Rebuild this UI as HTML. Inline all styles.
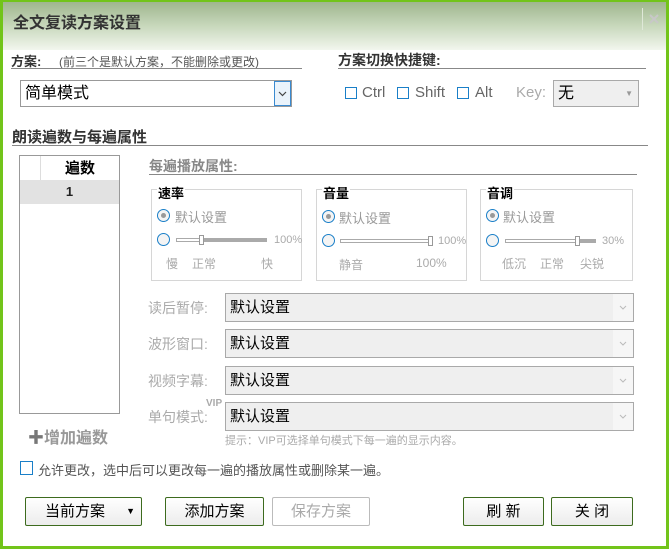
<!DOCTYPE html>
<html><head><meta charset="utf-8"><style>
*{margin:0;padding:0;box-sizing:border-box}
body{width:669px;height:549px;overflow:hidden;background:#fff;font-family:"Liberation Sans","Noto Sans CJK SC",sans-serif;position:relative;color:#333}
.a{position:absolute;white-space:nowrap}
.frame{position:absolute;left:0;top:0;width:669px;height:549px;border:3px solid #72c41a;border-top-width:2px}
.title{position:absolute;left:3px;top:2px;width:663px;height:48px;background:linear-gradient(#9fb68e,#c8d8bc 50%,#f2f6ee)}
.line{position:absolute;height:1px;background:#888}
.sel{position:absolute;border:1px solid #a9a9a9;background:#efefef;font-size:15px;color:#000;padding-left:4px;line-height:27px}
.sel svg.ch{position:absolute;right:0;top:0;width:20px;height:27px;background:#f6f6f6}
.cb{position:absolute;width:12px;height:12px;border:1px solid #1a7fc8;background:#fff}
.grp{position:absolute;border:1px solid #d6d6d6}
.leg{position:absolute;top:-7px;left:5px;background:#fff;font-weight:bold;font-size:13px;color:#000;padding:0 1px}
.rad{position:absolute;width:13px;height:13px;border:1px solid #1a7fc8;border-radius:50%;background:#f4f4f4}
.rad.on::after{content:"";position:absolute;left:3px;top:3px;width:5px;height:5px;border-radius:50%;background:#999}
.g{color:#aaa;font-size:12px}
.btn{position:absolute;height:29px;border:1px solid #3d6b1e;background:linear-gradient(#fff,#ececec);font-size:15px;color:#000;text-align:center;line-height:27px;border-radius:2px}
</style></head><body>
<div class="frame"></div>
<div class="title"></div>
<div class="a" style="left:13px;top:9px;font-size:16px;font-weight:bold;color:#333">全文复读方案设置</div>
<div class="a" style="left:642px;top:8px;width:22px;height:22px;border-left:1px solid #dfe8d8"><svg width="22" height="22"><path d="M7 7L15 15M15 7L7 15" stroke="#c8c8c8" stroke-width="2" fill="none"/></svg></div>

<div class="a" style="left:11px;top:51px;font-size:13px;font-weight:bold">方案:</div>
<div class="a" style="left:59px;top:53px;font-size:12px;color:#555">(前三个是默认方案，不能删除或更改)</div>
<div class="line" style="left:11px;top:68px;width:291px"></div>
<div class="sel" style="left:20px;top:80px;width:272px;height:27px;background:#fff;border-color:#999;font-size:16px;line-height:25px">简单模式
<div style="position:absolute;right:0;top:0;width:17px;height:25px;border:1px solid #3a8ad0;background:#eaf3fb"><svg width="15" height="23"><path d="M4 10L7.5 13.5L11 10" stroke="#444" stroke-width="1.2" fill="none"/></svg></div></div>

<div class="a" style="left:338px;top:50px;font-size:14px;font-weight:bold">方案切换快捷键:</div>
<div class="line" style="left:338px;top:68px;width:308px"></div>
<div class="cb" style="left:345px;top:87px"></div><div class="a" style="left:362px;top:84px;font-size:15px;color:#666">Ctrl</div>
<div class="cb" style="left:397px;top:87px"></div><div class="a" style="left:415px;top:84px;font-size:15px;color:#666">Shift</div>
<div class="cb" style="left:457px;top:87px"></div><div class="a" style="left:475px;top:84px;font-size:15px;color:#666">Alt</div>
<div class="a" style="left:516px;top:84px;font-size:15px;color:#aaa">Key:</div>
<div class="sel" style="left:553px;top:80px;width:86px;height:27px;font-size:16px;line-height:25px">无<span style="position:absolute;right:5px;top:0;font-size:8px;color:#999">▼</span></div>

<div class="a" style="left:12px;top:126px;font-size:15px;font-weight:bold">朗读遍数与每遍属性</div>
<div class="line" style="left:12px;top:145px;width:636px"></div>

<div class="a" style="left:19px;top:155px;width:101px;height:259px;border:1px solid #999;background:#fff"></div>
<div class="a" style="left:40px;top:156px;width:1px;height:24px;background:#ddd"></div>
<div class="a" style="left:41px;top:157px;width:78px;text-align:center;font-size:15px;font-weight:bold;color:#000">遍数</div>
<div class="a" style="left:20px;top:180px;width:99px;height:24px;background:#e2e2e2;text-align:center;font-size:13px;font-weight:bold;line-height:24px;color:#222">1</div>
<div class="a" style="left:28px;top:424px;font-size:16px;font-weight:bold;color:#999"><span style="color:#777">✚</span>增加遍数</div>

<div class="a" style="left:149px;top:156px;font-size:14px;font-weight:bold;color:#888">每遍播放属性:</div>
<div class="line" style="left:149px;top:174px;width:488px"></div>

<div class="grp" style="left:151px;top:189px;width:151px;height:92px"><div class="leg">速率</div></div>
<div class="rad on" style="left:157px;top:209px"></div><div class="a" style="left:175px;top:207px;font-size:13px;color:#999">默认设置</div>
<div class="rad" style="left:157px;top:233px"></div>
<div class="a" style="left:176px;top:238px;width:91px;height:4px;border:1px solid #aaa;background:linear-gradient(90deg,#fff 27%,#aaa 27%)"></div>
<div class="a" style="left:199px;top:235px;width:5px;height:10px;border:1px solid #999;background:#fff"></div>
<div class="a g" style="left:274px;top:234px;font-size:11px">100%</div>
<div class="a g" style="left:166px;top:255px">慢</div><div class="a g" style="left:192px;top:255px">正常</div><div class="a g" style="left:261px;top:255px">快</div>

<div class="grp" style="left:316px;top:189px;width:151px;height:92px"><div class="leg">音量</div></div>
<div class="rad on" style="left:322px;top:210px"></div><div class="a" style="left:339px;top:208px;font-size:13px;color:#999">默认设置</div>
<div class="rad" style="left:322px;top:234px"></div>
<div class="a" style="left:340px;top:239px;width:91px;height:4px;border:1px solid #aaa;background:#fff"></div>
<div class="a" style="left:428px;top:236px;width:5px;height:10px;border:1px solid #999;background:#fff"></div>
<div class="a g" style="left:438px;top:235px;font-size:11px">100%</div>
<div class="a g" style="left:339px;top:256px">静音</div><div class="a g" style="left:416px;top:256px">100%</div>

<div class="grp" style="left:480px;top:189px;width:153px;height:92px"><div class="leg">音调</div></div>
<div class="rad on" style="left:486px;top:209px"></div><div class="a" style="left:503px;top:207px;font-size:13px;color:#999">默认设置</div>
<div class="rad" style="left:486px;top:234px"></div>
<div class="a" style="left:505px;top:239px;width:91px;height:4px;border:1px solid #aaa;background:linear-gradient(90deg,#fff 78%,#aaa 78%)"></div>
<div class="a" style="left:575px;top:236px;width:5px;height:10px;border:1px solid #999;background:#fff"></div>
<div class="a g" style="left:602px;top:235px;font-size:11px">30%</div>
<div class="a g" style="left:502px;top:255px">低沉</div><div class="a g" style="left:540px;top:255px">正常</div><div class="a g" style="left:580px;top:255px">尖锐</div>

<div class="a" style="left:148px;top:298px;font-size:14px;color:#aaa">读后暂停:</div>
<div class="sel" style="left:225px;top:293px;width:409px;height:29px">默认设置<svg class="ch"><path d="M7 12L10 15L13 12" stroke="#bbb" stroke-width="1" fill="none"/></svg></div>
<div class="a" style="left:148px;top:334px;font-size:14px;color:#aaa">波形窗口:</div>
<div class="sel" style="left:225px;top:329px;width:409px;height:29px">默认设置<svg class="ch"><path d="M7 12L10 15L13 12" stroke="#bbb" stroke-width="1" fill="none"/></svg></div>
<div class="a" style="left:148px;top:371px;font-size:14px;color:#aaa">视频字幕:</div>
<div class="sel" style="left:225px;top:366px;width:409px;height:29px">默认设置<svg class="ch"><path d="M7 12L10 15L13 12" stroke="#bbb" stroke-width="1" fill="none"/></svg></div>
<div class="a" style="left:206px;top:398px;font-size:10px;font-weight:bold;color:#aaa">VIP</div>
<div class="a" style="left:148px;top:407px;font-size:14px;color:#aaa">单句模式:</div>
<div class="sel" style="left:225px;top:402px;width:409px;height:29px">默认设置<svg class="ch"><path d="M7 12L10 15L13 12" stroke="#bbb" stroke-width="1" fill="none"/></svg></div>
<div class="a" style="left:225px;top:432px;font-size:11px;color:#aaa">提示：VIP可选择单句模式下每一遍的显示内容。</div>

<div class="cb" style="left:20px;top:461px;width:13px;height:14px"></div>
<div class="a" style="left:38px;top:460px;font-size:13px;color:#555">允许更改，选中后可以更改每一遍的播放属性或删除某一遍。</div>

<div class="btn" style="left:25px;top:497px;width:117px;text-align:left;padding-left:19px">当前方案<span style="position:absolute;right:6px;top:0;font-size:9px">▼</span></div>
<div class="btn" style="left:165px;top:497px;width:99px">添加方案</div>
<div class="btn" style="left:272px;top:497px;width:98px;border-color:#bbb;background:#fff;color:#aaa">保存方案</div>
<div class="btn" style="left:463px;top:497px;width:81px">刷 新</div>
<div class="btn" style="left:551px;top:497px;width:82px">关 闭</div>
</body></html>
